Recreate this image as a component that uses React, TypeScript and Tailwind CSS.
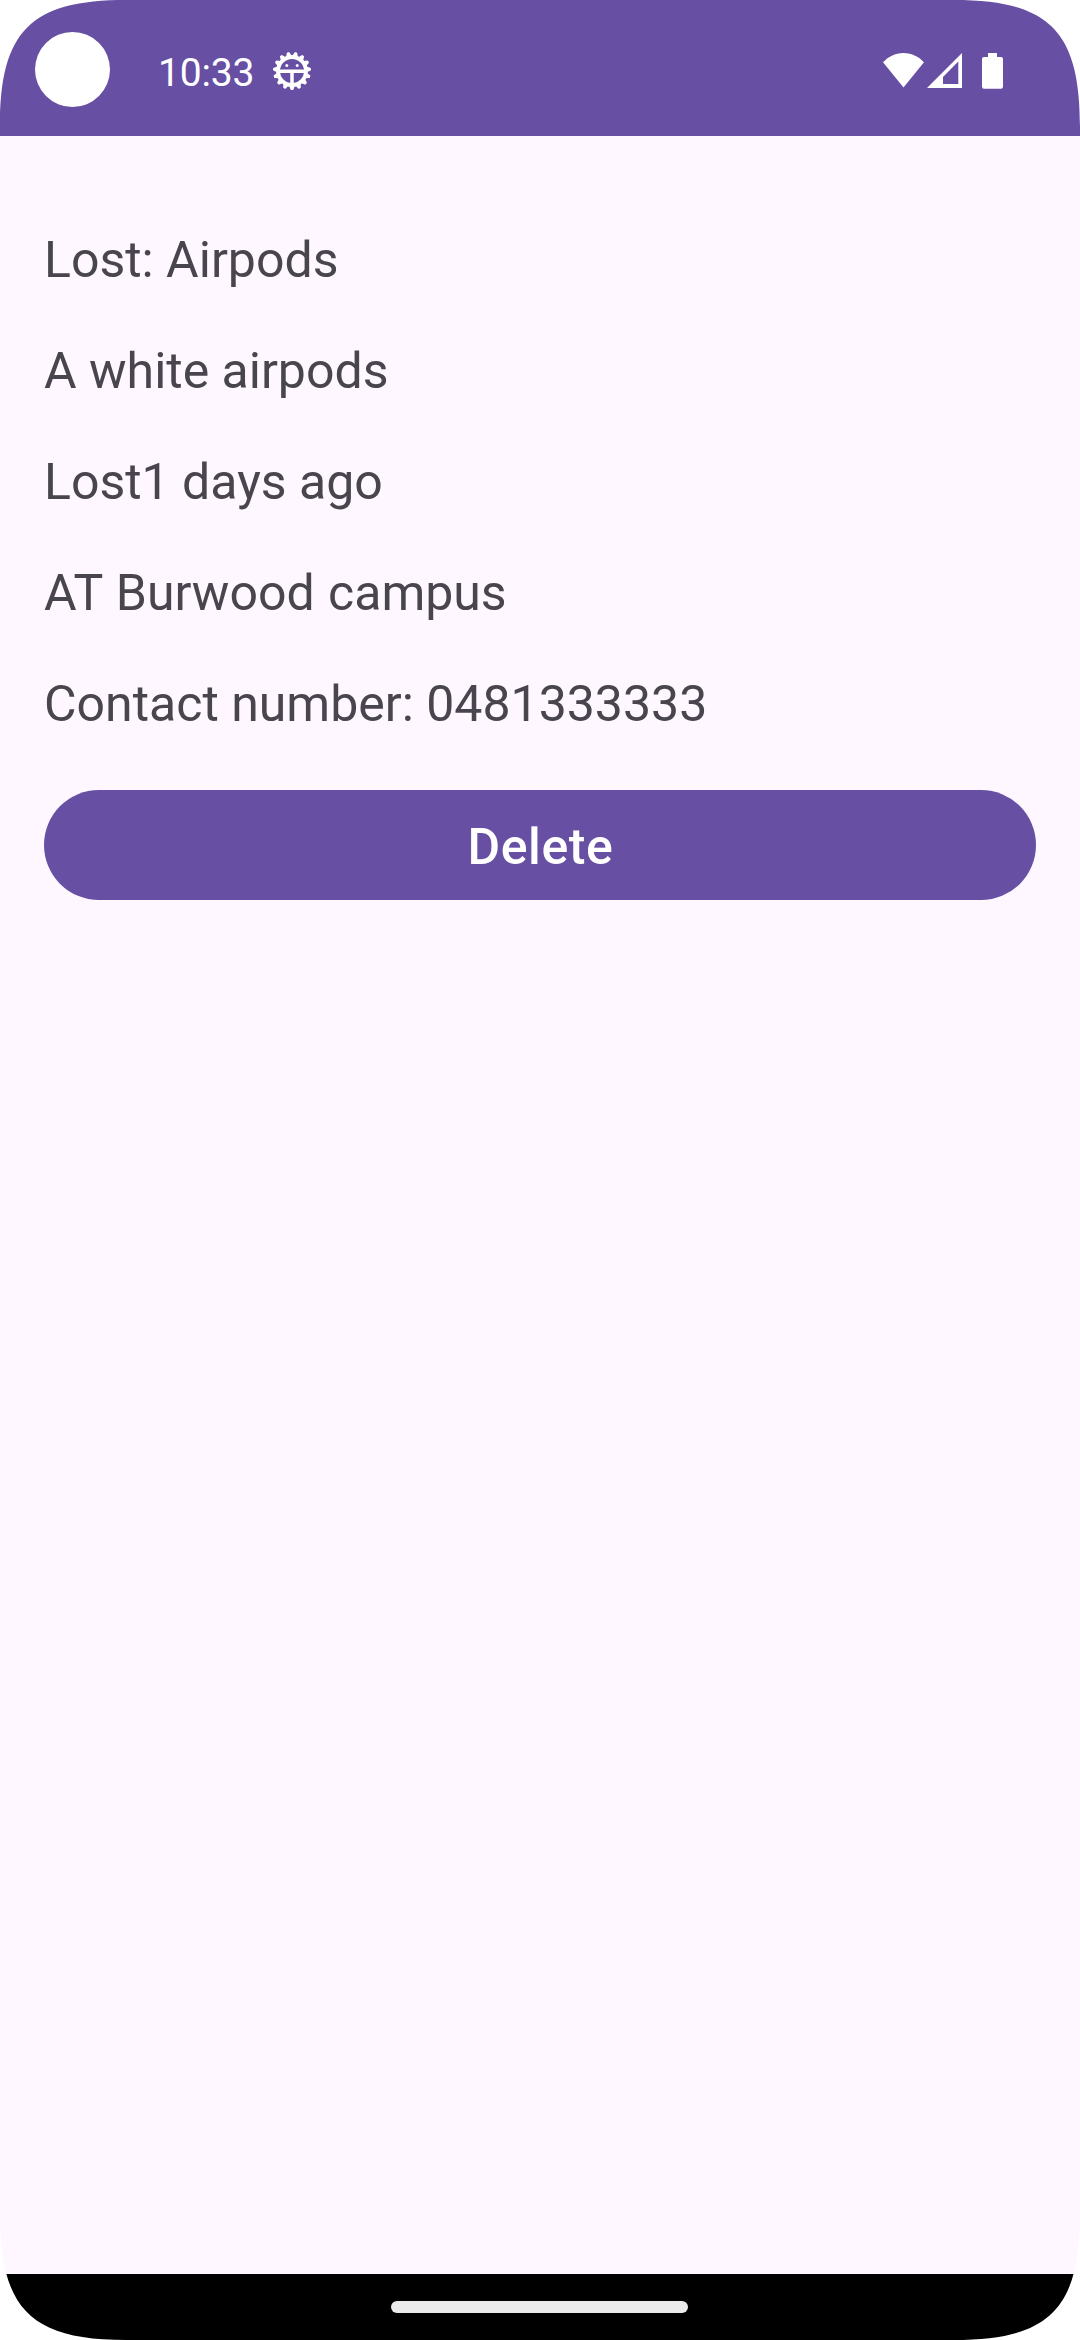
const details = [
  'Lost: Airpods',
  'A white airpods',
  'Lost1 days ago',
  'AT Burwood campus',
  'Contact number: 0481333333',
];

const teeth = Array.from({ length: 15 }, (_, i) => 90 + i * 24);

function DebugIcon() {
  return (
    <svg className="ml-[18px] size-10" viewBox="-20 -20 40 40" fill="none">
      <circle r="14" stroke="#fff" strokeWidth="3.9" />
      {teeth.map((a) => (
        <path
          key={a}
          d="M15 -1.9L18.200 -0.700V0.700L15 1.9Z"
          transform={`rotate(${a})`}
          fill="#fff"
          stroke="#fff"
          strokeWidth="1.6"
          strokeLinejoin="round"
        />
      ))}
      <path d="M-14 0.2H14M0 0V14" stroke="#fff" strokeWidth="3.5" />
      <circle cx="-5.2" cy="-5.6" r="1.5" fill="#fff" />
      <circle cx="5.2" cy="-5.6" r="1.5" fill="#fff" />
    </svg>
  );
}

function StatusIcons() {
  return (
    <svg className="mr-[76px] mt-[52px] h-[38px] w-[122px]" viewBox="882 52 122 38" fill="#fff">
      <path d="M883 62.3C888 57 895 53 903.500 53S919 57 924 62.300L903.500 87.500Z" />
      <path fillRule="evenodd" d="M962 53V88H927ZM958.300 61.500L943 77V84H958.300Z" />
      <path d="M988 53H997V57H1001Q1003 57 1003 59V86.500Q1003 88.700 1001 88.700H984Q982 88.700 982 86.500V59Q982 57 984 57H988Z" />
    </svg>
  );
}

function Corner({ className }: { className: string }) {
  return (
    <svg className={`absolute size-[126px] ${className}`} viewBox="0 0 126 126">
      <path d="M0 0H126C31 0 0 31 0 126Z" fill="#fff" />
    </svg>
  );
}

export default function App() {
  return (
    <div className="relative flex h-[2340px] w-[1080px] flex-col overflow-hidden bg-[#fef7ff] font-['Roboto',sans-serif]">
      <header className="flex h-[136px] items-start justify-between bg-[#6750a4]">
        <div className="flex items-start">
          <div className="ml-[35px] mt-8 size-[75px] rounded-full bg-white" />
          <div className="ml-12 mt-[49px] flex items-center">
            <span className="pt-1 text-[39px] leading-10 tracking-[-0.2px] text-white">10:33</span>
            <DebugIcon />
          </div>
        </div>
        <StatusIcons />
      </header>
      <main className="flex flex-1 flex-col px-11 pt-[91px]">
        {details.map((line) => (
          <p
            key={line}
            className={`mb-11 text-[50px] leading-[67px] text-[#49454f] ${line.startsWith('AT') ? '[word-spacing:1px]' : ''}`}
          >
            {line}
          </p>
        ))}
        <button className="mt-2 h-[110px] rounded-full bg-[#6750a4] pl-px pt-1 text-[50px] font-medium tracking-[0.012em] text-white">
          Delete
        </button>
      </main>
      <footer className="flex h-[66px] justify-center bg-black pr-0.5 pt-[27px]">
        <div className="h-3 w-[297px] rounded-full bg-[#ebebeb]" />
      </footer>
      <Corner className="left-0 top-0" />
      <Corner className="right-0 top-0 -scale-x-100" />
      <Corner className="bottom-0 left-0 -scale-y-100" />
      <Corner className="bottom-0 right-0 -scale-100" />
    </div>
  );
}
